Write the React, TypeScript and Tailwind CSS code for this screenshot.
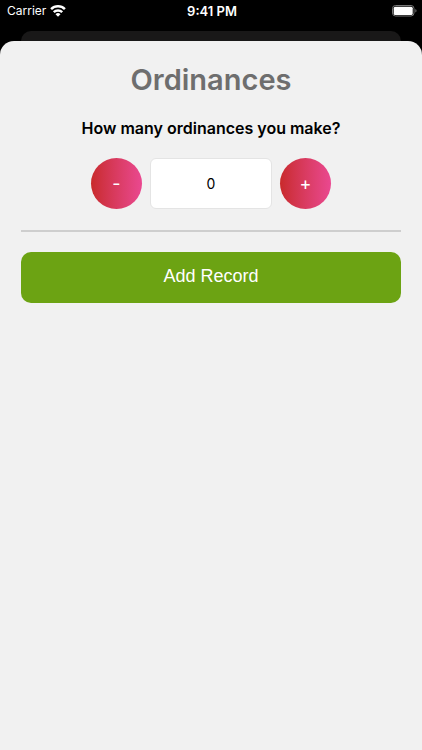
import { useState } from "react";

function StatusBar() {
  return (
    <header className="grid h-[31px] grid-cols-3 items-start pr-[5px] pl-[7px] pt-[3px] text-[13px] leading-4 text-white">
      <div className="flex items-center gap-1">
        <span className="text-xs leading-4">Carrier</span>
        <svg viewBox="0 0 16 12" className="h-3 w-4" fill="none" stroke="currentColor" strokeWidth="2.5">
          <path d="M1.1 4.2a9.8 9.8 0 0 1 13.8 0" />
          <path d="M3.8 7.1a6 6 0 0 1 8.4 0" />
          <path d="M8 11.8 5.5 9.3a3.5 3.5 0 0 1 5 0z" fill="currentColor" stroke="none" />
        </svg>
      </div>
      <span className="text-center font-semibold">9:41 PM</span>
      <svg viewBox="0 0 25 12" className="mt-[2px] h-3 w-[25px] justify-self-end" fill="none">
        <rect x="0.5" y="0.5" width="21.5" height="10.5" rx="3" stroke="#777777" />
        <rect x="1.7" y="1.7" width="19" height="8.2" rx="1.5" fill="#ffffff" />
        <path d="M23.4 4v3.6c1.5-.6 1.5-3 0-3.6z" fill="#777777" />
      </svg>
    </header>
  );
}

const roundButton =
  "size-[51px] shrink-0 rounded-full bg-linear-to-r from-[#c92a2a] to-[#ea4890] text-lg leading-6 text-white";

export default function App() {
  const [count, setCount] = useState("0");

  const step = (amount: number) => {
    setCount((current) => String(Math.max(0, (Number(current) || 0) + amount)));
  };

  return (
    <div className="flex min-h-screen flex-col bg-black font-[Inter,sans-serif]">
      <StatusBar />
      <div className="mx-[21px] h-[10px] rounded-t-[10px] bg-[#191818]" />

      <main className="flex-1 rounded-t-[14px] bg-[#f1f1f1] px-[21px] pt-[19px]">
        <h1 className="text-center text-[29px] leading-10 font-semibold text-[#6e6e6e]">
          Ordinances
        </h1>
        <label htmlFor="count" className="mt-4 block text-center text-base leading-6 font-semibold text-black">
          How many ordinances you make?
        </label>

        <div className="mt-[18px] flex justify-center gap-2">
          <button type="button" aria-label="Decrease" className={roundButton} onClick={() => step(-1)}>
            -
          </button>
          <input
            id="count"
            type="text"
            inputMode="numeric"
            value={count}
            onChange={(e) => setCount(e.target.value)}
            className="h-[51px] w-[122px] rounded-md border border-[#e4e4e4] bg-white text-center text-sm text-black outline-none"
          />
          <button type="button" aria-label="Increase" className={roundButton} onClick={() => step(1)}>
            +
          </button>
        </div>

        <hr className="mt-[21px] border-t-2 border-[#cecece]" />

        <button
          type="button"
          className="mt-5 h-[51px] w-full rounded-[10px] bg-[#6ca313] pb-1 font-['Liberation_Sans',sans-serif] text-lg text-white"
        >
          Add Record
        </button>
      </main>
    </div>
  );
}
